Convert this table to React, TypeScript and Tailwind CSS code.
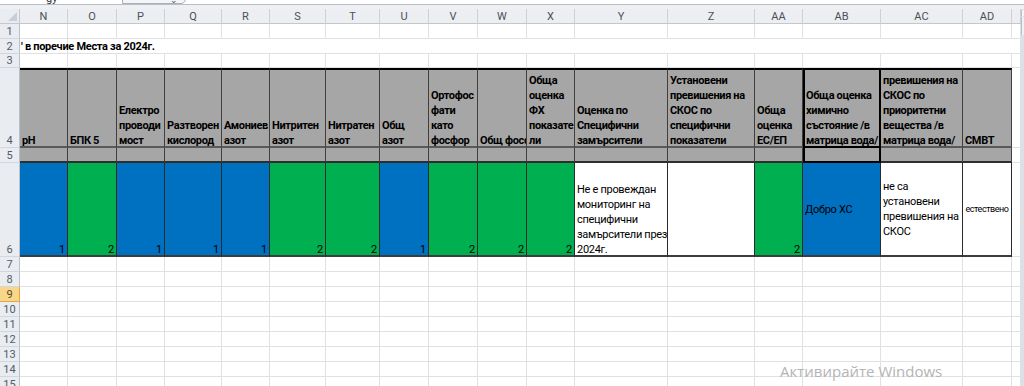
import React from "react";

type Col = {
  id: string;
  h: string[];
  fill: "blue" | "green" | "white";
  v?: string;
  kind?: "num" | "bottomText" | "center" | "centerSmall";
  lines?: string[];
};

const cols: Col[] = [
  { id: "N", h: ["pH"], fill: "blue", v: "1", kind: "num" },
  { id: "O", h: ["БПК 5"], fill: "green", v: "2", kind: "num" },
  { id: "P", h: ["Електро", "проводи", "мост"], fill: "blue", v: "1", kind: "num" },
  { id: "Q", h: ["Разтворен", "кислород"], fill: "blue", v: "1", kind: "num" },
  { id: "R", h: ["Амониев", "азот"], fill: "blue", v: "1", kind: "num" },
  { id: "S", h: ["Нитритен", "азот"], fill: "green", v: "2", kind: "num" },
  { id: "T", h: ["Нитратен", "азот"], fill: "green", v: "2", kind: "num" },
  { id: "U", h: ["Общ", "азот"], fill: "blue", v: "1", kind: "num" },
  { id: "V", h: ["Ортофос", "фати", "като", "фосфор"], fill: "green", v: "2", kind: "num" },
  { id: "W", h: ["Общ фосфор"], fill: "green", v: "2", kind: "num" },
  { id: "X", h: ["Обща", "оценка", "ФХ", "показате", "ли"], fill: "green", v: "2", kind: "num" },
  {
    id: "Y",
    h: ["Оценка по", "Специфични", "замърсители"],
    fill: "white",
    kind: "bottomText",
    lines: ["Не е провеждан", "мониторинг на", "специфични", "замърсители през", "2024г."],
  },
  { id: "Z", h: ["Установени", "превишения на", "СКОС по", "специфични", "показатели"], fill: "white" },
  { id: "AA", h: ["Обща", "оценка", "ЕС/ЕП"], fill: "green", v: "2", kind: "num" },
  { id: "AB", h: ["Обща оценка", "химично", "състояние /в", "матрица вода/"], fill: "blue", kind: "center", lines: ["Добро ХС"] },
  {
    id: "AC",
    h: ["превишения на", "СКОС по", "приоритетни", "вещества /в", "матрица вода/"],
    fill: "white",
    kind: "center",
    lines: ["не са", "установени", "превишения на", "СКОС"],
  },
  { id: "AD", h: ["СМВТ"], fill: "white", kind: "centerSmall", lines: ["естествено"] },
];

const gridCols =
  "grid grid-cols-[20px_48px_49px_48px_57px_48px_56px_54px_49px_49px_49px_48px_93px_87px_48px_78px_82px_49px_9px]";

const font = "font-['Roboto',sans-serif]";

function RowHead({ n, cls, active }: { n: number; cls?: string; active?: boolean }) {
  return (
    <div
      className={
        active
          ? "flex items-center justify-center bg-[#f8d68a] border-b border-r border-[#e3a83c] text-[11px] text-[#5a4a2a] leading-none"
          : `flex justify-center bg-[#e9ecf0] border-b border-r border-b-[#d3d7dd] border-r-[#b9c0ca] text-[11px] text-[#555b63] leading-none ${cls ?? "items-center"}`
      }
    >
      {n}
    </div>
  );
}

function Plain() {
  return <div className="border-r border-b border-[#dfe1e3]" />;
}

function fillClass(f: Col["fill"]) {
  if (f === "blue") return "bg-[#0070c0]";
  if (f === "green") return "bg-[#00b050]";
  return "bg-white";
}

export default function App() {
  const plainRows = [7, 8, 9, 10, 11, 12, 13, 14, 15];
  return (
    <div className={`relative w-[1024px] h-[386px] overflow-hidden bg-white ${font}`}>
      {/* top formula strip */}
      <div className="relative h-[9px] bg-[#eef0f3]">
        <div className="h-[5px] bg-white border-b border-[#b8bec7] overflow-hidden relative">
          <span className="absolute left-[46px] top-[-9px] text-[11px] text-[#333]">gy</span>
          <div className="absolute left-[122px] top-[-6px] w-[64px] h-[10px] rounded-r-[6px] border border-[#a9b0ba] bg-[#f4f5f7]" />
          <span className="absolute left-[170px] top-[-6px] text-[9px] text-[#555]">⌄</span>
        </div>
      </div>

      <div className="flex">
        <div className="w-[1021px]">
          {/* column header row */}
          <div className={`${gridCols} h-[15px]`}>
            <div className="relative bg-[#e9ecf0] border-r border-b border-[#c3c8cf]">
              <div className="absolute right-[2px] bottom-[2px] w-0 h-0 border-l-[9px] border-l-transparent border-b-[9px] border-b-[#c9ced5]" />
            </div>
            {cols.map((c) => (
              <div
                key={c.id}
                className="flex items-center justify-center bg-[#eceef2] border-r border-b border-r-[#cdd1d7] border-b-[#c3c8cf] text-[11px] text-[#4b5058] leading-none"
              >
                {c.id}
              </div>
            ))}
            <div className="bg-[#eceef2] border-r border-b border-r-[#cdd1d7] border-b-[#c3c8cf]" />
          </div>

          {/* rows 1-3 */}
          <div className={`${gridCols} grid-rows-[15px_15px_14px]`}>
            <RowHead n={1} />
            {cols.map((c) => (
              <Plain key={"r1" + c.id} />
            ))}
            <Plain />

            <RowHead n={2} />
            <div className="relative border-r border-b border-[#dfe1e3]">
              <span className="absolute left-[1px] top-[1px] whitespace-nowrap text-[11px] font-bold leading-[13px] tracking-[-0.3px] text-black">
                ' в поречие Места за 2024г.
              </span>
            </div>
            {cols.slice(1).map((c) => (
              <div key={"r2" + c.id} className="border-b border-[#dfe1e3]" />
            ))}
            <Plain />

            <RowHead n={3} />
            {cols.map((c) => (
              <Plain key={"r3" + c.id} />
            ))}
            <Plain />
          </div>

          {/* row 4 header */}
          <div className={`${gridCols} h-[80px]`}>
            <RowHead n={4} cls="items-end pb-[1px]" />
            {cols.map((c) => (
              <div
                key={"r4" + c.id}
                className={
                  c.id === "AB"
                    ? "flex flex-col justify-end overflow-hidden bg-[#a6a6a6] border-t-2 border-t-black border-b-2 border-b-black border-x-2 border-x-black pl-[1px] text-[11px] font-bold leading-[15px] tracking-[-0.35px] text-black"
                    : "flex flex-col justify-end overflow-hidden bg-[#a6a6a6] border-t-2 border-t-black border-b-2 border-b-[#595959] border-r border-r-[#3f3f3f] pl-[2px] text-[11px] font-bold leading-[15px] tracking-[-0.35px] text-black"
                }
              >
                <div className="-mb-[2px]">
                  {c.h.map((l, i) => (
                    <span key={i} className="block whitespace-nowrap">
                      {l}
                    </span>
                  ))}
                </div>
              </div>
            ))}
            <div className="border-r border-b border-[#dfe1e3]" />
          </div>

          {/* row 5 */}
          <div className={`${gridCols} h-[15px]`}>
            <RowHead n={5} />
            {cols.map((c) => (
              <div
                key={"r5" + c.id}
                className={
                  c.id === "AB"
                    ? "bg-[#a6a6a6] border-2 border-t-0 border-black"
                    : "bg-[#a6a6a6] border-r border-b-2 border-r-[#3f3f3f] border-b-[#2e2e2e]"
                }
              />
            ))}
            <Plain />
          </div>

          {/* row 6 */}
          <div className={`${gridCols} h-[94px]`}>
            <RowHead n={6} cls="items-end pb-[1px]" />
            {cols.map((c) => {
              const base = `${fillClass(c.fill)} border-r border-b-2 border-r-[#2a2a2a] border-b-[#3c3c3c] text-black text-[11px] leading-[15px] tracking-[-0.3px] overflow-hidden`;
              if (c.kind === "num")
                return (
                  <div key={"r6" + c.id} className={`${base} flex items-end justify-end pr-[2px]`}>
                    <span className="-mb-[2px]">{c.v}</span>
                  </div>
                );
              if (c.kind === "bottomText")
                return (
                  <div key={"r6" + c.id} className={`${base} flex flex-col justify-end pl-[2px]`}>
                    <div className="-mb-[2px]">
                      {c.lines!.map((l, i) => (
                        <span key={i} className="block whitespace-nowrap">
                          {l}
                        </span>
                      ))}
                    </div>
                  </div>
                );
              if (c.kind === "center")
                return (
                  <div key={"r6" + c.id} className={`${base} flex flex-col justify-center pl-[2px]`}>
                    {c.lines!.map((l, i) => (
                      <span key={i} className="block whitespace-nowrap">
                        {l}
                      </span>
                    ))}
                  </div>
                );
              if (c.kind === "centerSmall")
                return (
                  <div
                    key={"r6" + c.id}
                    className={`${fillClass(c.fill)} border-r border-b-2 border-r-[#2a2a2a] border-b-[#3c3c3c] text-black overflow-hidden flex items-center justify-center text-[9px] tracking-[-0.45px] leading-none`}
                  >
                    {c.lines![0]}
                  </div>
                );
              return <div key={"r6" + c.id} className={base} />;
            })}
            <Plain />
          </div>

          {/* rows 7-15 */}
          <div className={`${gridCols} auto-rows-[15px]`}>
            {plainRows.map((n) => (
              <React.Fragment key={n}>
                <RowHead n={n} active={n === 9} />
                {cols.map((c) => (
                  <Plain key={n + c.id} />
                ))}
                <Plain />
              </React.Fragment>
            ))}
          </div>
        </div>

        {/* vertical scrollbar sliver */}
        <div className="w-[3px] bg-[#dde1e7] flex flex-col">
          <div className="mt-[1px] h-[6px] bg-[#f3f5f8] border-l border-[#b8bec7]" />
          <div className="mt-[1px] h-[18px] bg-[#eef1f5] border-l border-[#b8bec7]" />
        </div>
      </div>

      {/* Windows activation watermark */}
      <div className="absolute left-[780px] top-[362px] text-[15px] leading-[18px] text-[#b4b4b4] font-['Open_Sans',sans-serif] whitespace-nowrap">
        Активирайте Windows
      </div>
      <div className="absolute left-[780px] top-[384px] text-[12px] leading-[15px] text-[#c4c4c4] font-['Open_Sans',sans-serif] whitespace-nowrap">
        Отидете в „Настройки“, за да активирате Windows.
      </div>
    </div>
  );
}
